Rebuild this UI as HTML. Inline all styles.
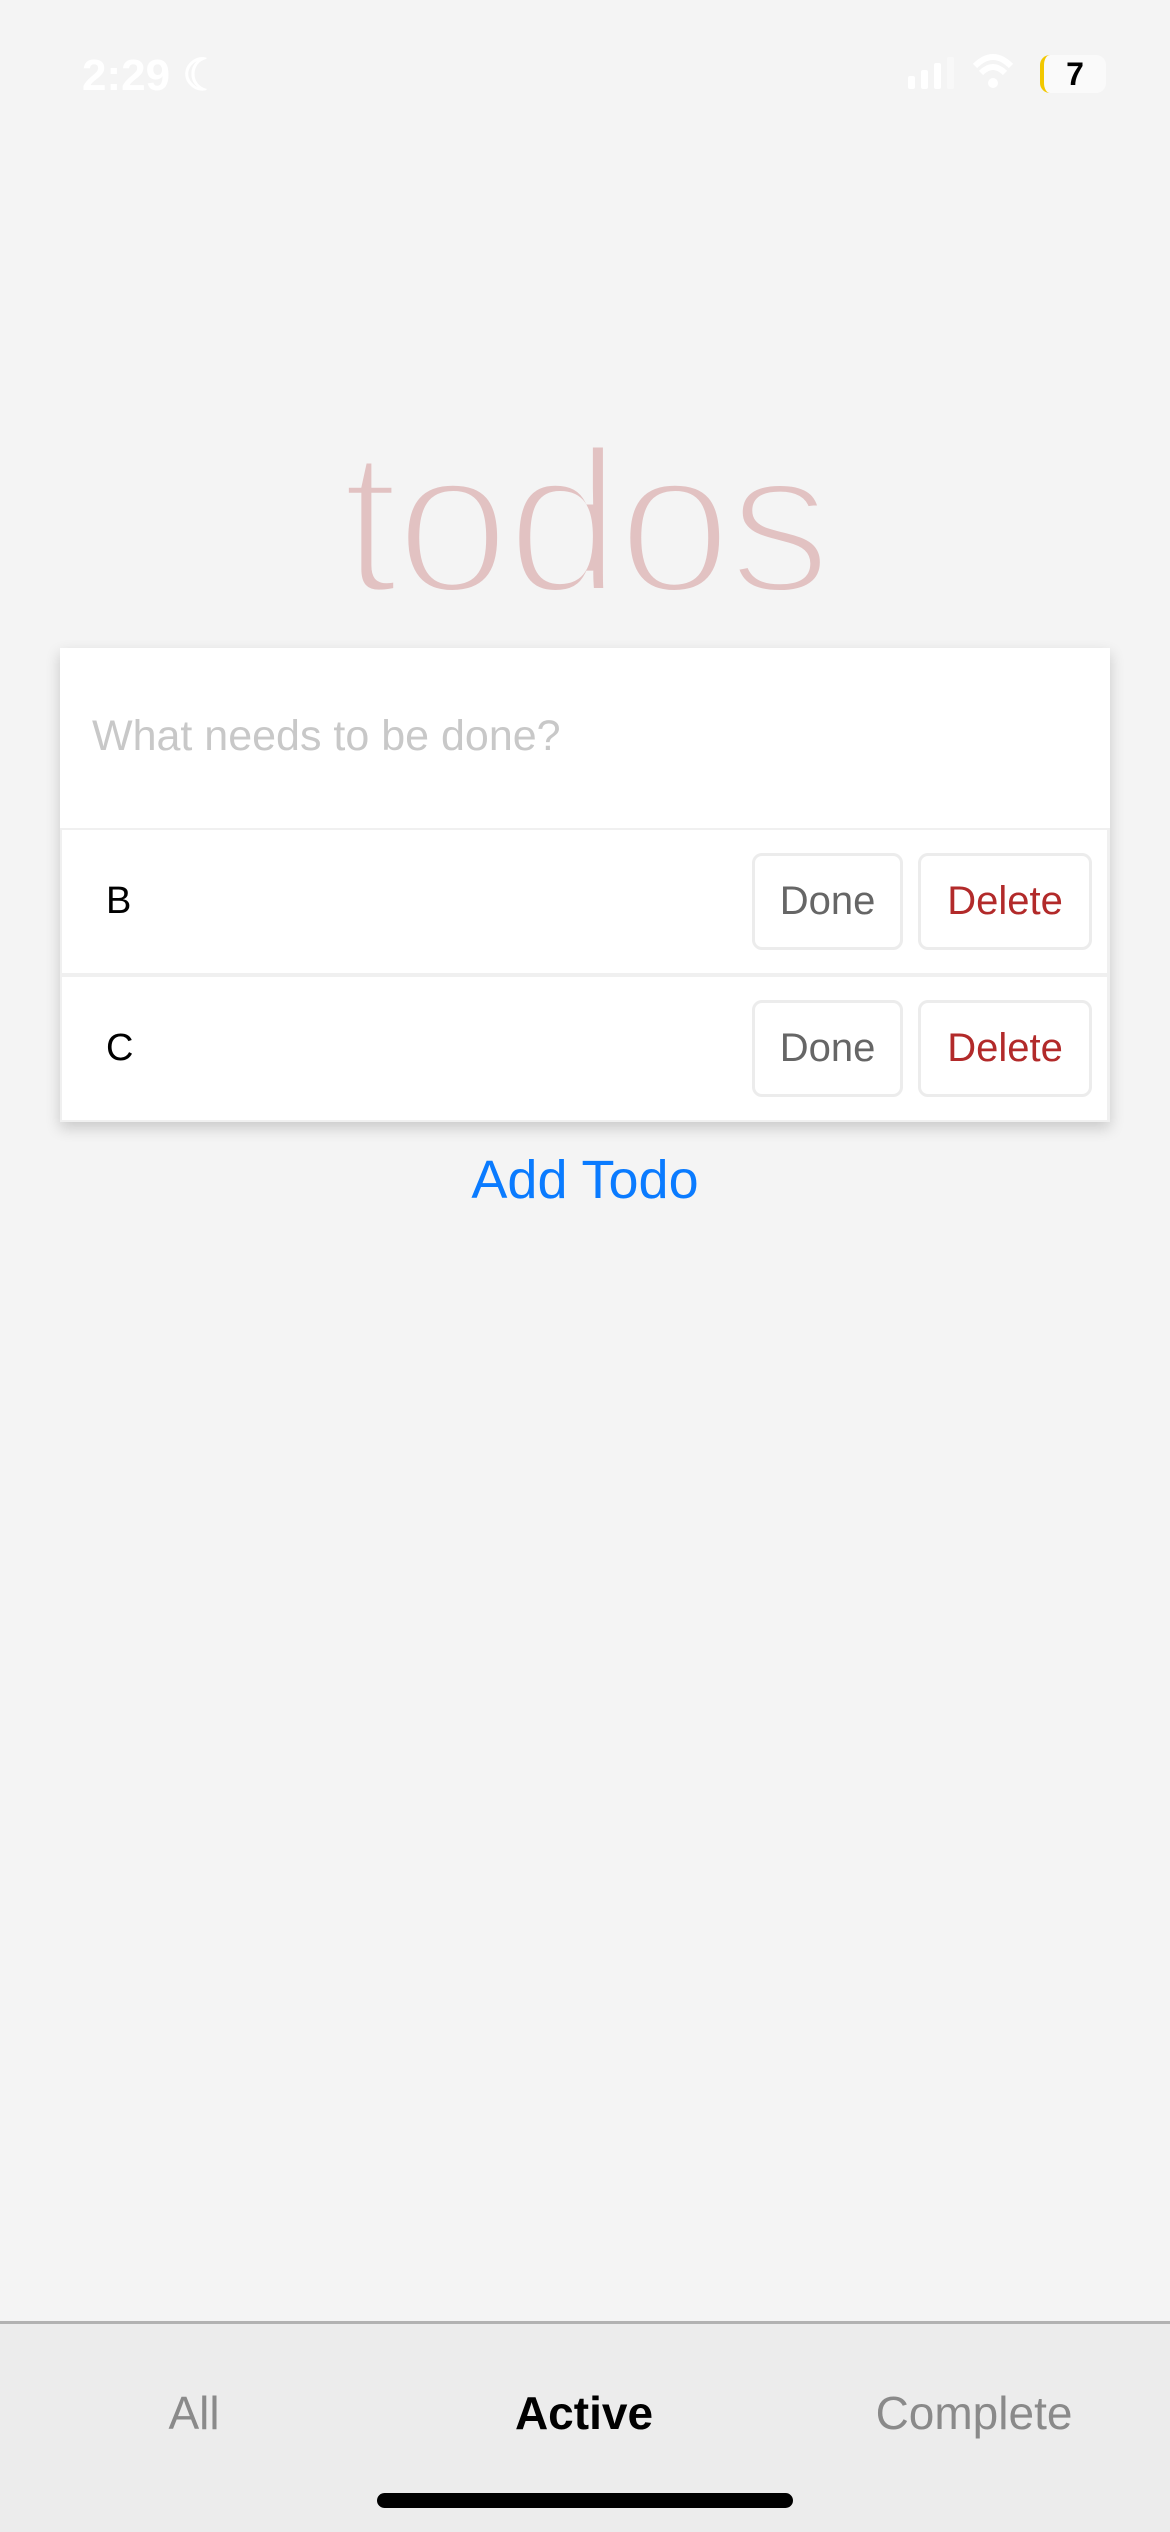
<!DOCTYPE html>
<html><head><meta charset="utf-8"><style>
*{margin:0;padding:0;box-sizing:border-box}
body{width:1170px;height:2532px;background:#f4f4f4;font-family:"Liberation Sans",sans-serif;position:relative;overflow:hidden}
.abs{position:absolute}
.card{left:60px;top:648px;width:1050px;height:474px;background:#f0f0f0;box-shadow:0 6px 14px rgba(0,0,0,0.18)}
.input{left:60px;top:648px;width:1050px;height:180px;background:#fff}
.ph{left:92px;top:712px;font-size:43px;color:#c8c8c8}
.row{left:62px;width:1045px;height:143px;background:#fff}
.lbl{left:106px;font-size:38px;color:#000}
.btn{height:97px;border:3px solid #ececec;border-radius:10px;background:#fff;font-size:40px;text-align:center;line-height:91px}
.done{left:752px;width:151px;color:#666}
.del{left:918px;width:174px;color:#b22a2a}
.add{left:0;width:1170px;text-align:center;top:1149px;font-size:54px;color:#0a7bff}
.tab{left:0;top:2321px;width:1170px;height:211px;background:#ececec;border-top:3px solid #b2b2b2}
.t{top:2386px;font-size:46px;color:#8a8a8a;width:300px;text-align:center}
.tt{font-family:"Liberation Sans",Arial,sans-serif;font-size:205px}
</style></head><body>
<div class="abs" style="left:82px;top:50px;font-size:44px;font-weight:bold;color:#fff">2:29 ☾</div>
<svg class="abs" style="left:900px;top:52px" width="140" height="42">
<rect x="8" y="24" width="7" height="13" rx="2" fill="#fff"/><rect x="21" y="18" width="7" height="19" rx="2" fill="#fff"/><rect x="34" y="11" width="7" height="26" rx="2" fill="#fff"/><rect x="47" y="5" width="7" height="32" rx="2" fill="#f8f8f8"/>
<path d="M75 14 Q93 -4 111 14 M81 21 Q93 9 105 21" stroke="#fff" stroke-width="6" fill="none"/><circle cx="93" cy="31" r="5" fill="#fff"/>
</svg>
<div class="abs" style="left:1040px;top:55px;width:66px;height:38px;border-radius:10px;background:#fafafa;border-left:4px solid #f2c800;font-weight:bold;font-size:32px;text-align:center;line-height:38px">7</div>
<svg class="abs" style="left:0;top:400px" width="1170" height="220">
<text class="tt" x="585" y="192" text-anchor="middle" fill="#e2c2c2" stroke="#f4f4f4" stroke-width="8" letter-spacing="-3" paint-order="fill">todos</text>
</svg>
<div class="abs card"></div>
<div class="abs input"></div>
<div class="abs ph">What needs to be done?</div>
<div class="abs row" style="top:830px"></div>
<div class="abs lbl" style="top:880px">B</div>
<div class="abs btn done" style="top:853px">Done</div>
<div class="abs btn del" style="top:853px">Delete</div>
<div class="abs row" style="top:977px"></div>
<div class="abs lbl" style="top:1027px">C</div>
<div class="abs btn done" style="top:1000px">Done</div>
<div class="abs btn del" style="top:1000px">Delete</div>
<div class="abs add">Add Todo</div>
<div class="abs tab"></div>
<div class="abs t" style="left:44px">All</div>
<div class="abs t" style="left:434px;color:#000;font-weight:bold">Active</div>
<div class="abs t" style="left:824px">Complete</div>
<div class="abs" style="left:377px;top:2493px;width:416px;height:15px;border-radius:8px;background:#000"></div>
</body></html>
